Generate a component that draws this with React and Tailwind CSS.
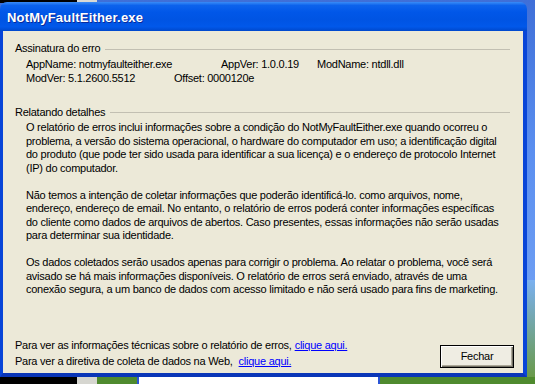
import React from "react";

const P1 = [
  "O relatório de erros inclui informações sobre a condição do NotMyFaultEither.exe quando ocorreu o",
  "problema, a versão do sistema operacional, o hardware do computador em uso; a identificação digital",
  "do produto (que pode ter sido usada para identificar a sua licença) e o endereço de protocolo Internet",
  "(IP) do computador.",
];
const P2 = [
  "Não temos a intenção de coletar informações que poderão identificá-lo. como arquivos, nome,",
  "endereço, endereço de email. No entanto, o relatório de erros poderá conter informações específicas",
  "do cliente como dados de arquivos de abertos. Caso presentes, essas informações não serão usadas",
  "para determinar sua identidade.",
];
const P3 = [
  "Os dados coletados serão usados apenas para corrigir o problema. Ao relatar o problema, você será",
  "avisado se há mais informações disponíveis. O relatório de erros será enviado, através de uma",
  "conexão segura, a um banco de dados com acesso limitado e não será usado para fins de marketing.",
];

function Para({ lines, className = "" }) {
  return (
    <div className={className}>
      {lines.map((l, i) => (
        <div key={i} className="whitespace-nowrap leading-[13.5px]">
          {l}
        </div>
      ))}
    </div>
  );
}

function GroupHeader({ children, className = "" }) {
  return (
    <div className={"flex items-center leading-[13.5px] mr-[4px] " + className}>
      <span className="whitespace-nowrap">{children}</span>
      <div className="flex-1 h-px bg-[#c2bfb2] ml-[5px] mt-[1px]" />
    </div>
  );
}

export default function App() {
  return (
    <div className="relative w-[535px] h-[384px] overflow-hidden bg-[linear-gradient(180deg,#3f6fd8_0%,#5b8ff0_40%,#7aa8f5_100%)] font-['Liberation_Sans',Arial,sans-serif] text-[11px] tracking-[-0.25px] text-black">
      {/* desktop bits behind the window */}
      <div className="absolute left-0 top-0 w-[77px] h-[3px] bg-black" />
      <div className="absolute left-[77px] top-0 w-[20px] h-[3px] bg-[#d9d9d4]" />
      <div className="absolute left-0 top-[377px] w-[535px] h-[7px] bg-[#4f8a2e]" />
      <div className="absolute left-0 top-[377px] w-[77px] h-[7px] bg-black" />
      <div className="absolute left-[77px] top-[377px] w-[20px] h-[7px] bg-[#d6d6d0]" />
      <div className="absolute left-[137px] top-[377px] w-[243px] h-[7px] bg-[#2b55d6]" />
      <div className="absolute left-[139px] top-[377px] w-[239px] h-[7px] bg-white" />
      <div className="absolute right-0 top-[280px] w-[8px] h-[97px] bg-[linear-gradient(180deg,#7ab0f0,#6a9a4a)]" />

      {/* window */}
      <div className="absolute left-0 top-[2px] w-[527px] h-[375px] flex flex-col">
        <div className="h-[29px] shrink-0 rounded-t-[7px] bg-[linear-gradient(180deg,#3a8cf7_0%,#0c62ec_12%,#0157e8_35%,#0054e3_60%,#0158ea_85%,#0048cc_100%)] flex items-center pl-[7px]">
          <span className="text-white font-bold text-[13px] font-['Liberation_Sans',Arial,sans-serif] tracking-[0.2px] [text-shadow:1px_1px_#0a2a9a] mt-[3px]">
            NotMyFaultEither.exe
          </span>
        </div>
        <div className="flex-1 flex flex-col bg-[#ECE9D8] border-l-[3px] border-r-[4px] border-b-[4px] border-[#0845d8] border-b-[#0a36b8] pt-[11px] pl-[12px] pr-[9px]">
          <GroupHeader>Assinatura do erro</GroupHeader>
          <div className="pl-[11px] mt-[2px]">
            <div className="flex h-[14px] items-center whitespace-nowrap">
              <span className="w-[195px]">AppName: notmyfaulteither.exe</span>
              <span className="w-[96px]">AppVer: 1.0.0.19</span>
              <span>ModName: ntdll.dll</span>
            </div>
            <div className="flex h-[14px] items-center whitespace-nowrap">
              <span className="w-[148px]">ModVer: 5.1.2600.5512</span>
              <span>Offset: 0000120e</span>
            </div>
          </div>
          <GroupHeader className="mt-[20px]">Relatando detalhes</GroupHeader>
          <div className="pl-[11px] mt-[2px]">
            <Para lines={P1} />
            <Para lines={P2} className="mt-[13.5px]" />
            <Para lines={P3} className="mt-[13.5px]" />
          </div>
          <div className="mt-auto flex items-end justify-between pb-[4px]">
            <div className="flex flex-col">
              <div className="leading-[16px] whitespace-nowrap">
                Para ver as informações técnicas sobre o relatório de erros,
                <a href="#" className="ml-[3px] text-[#0000ff] underline">clique aqui.</a>
              </div>
              <div className="leading-[16px] whitespace-nowrap">
                Para ver a diretiva de coleta de dados na Web,
                <a href="#" className="ml-[6px] text-[#0000ff] underline">clique aqui.</a>
              </div>
            </div>
            <button className="w-[74px] h-[23px] mb-[1px] border border-black bg-[#efede3] shadow-[inset_1px_1px_#ffffff,inset_-1px_-1px_#716f64,inset_-2px_-2px_#aca899] text-[11px] text-black flex items-center justify-center">
              Fechar
            </button>
          </div>
        </div>
      </div>
    </div>
  );
}
